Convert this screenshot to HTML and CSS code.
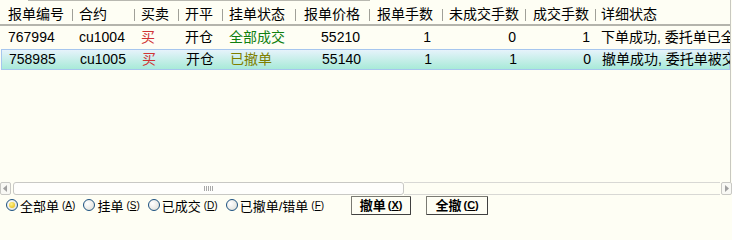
FILE: index.html
```html
<!DOCTYPE html>
<html lang="zh">
<head>
<meta charset="utf-8">
<link rel="stylesheet" href="styles.css">
</head>
<body>
<div class="panel">
  <div class="grid">
    <div class="topline"></div>
    <div class="row head">
      <div class="c c1">报单编号</div>
      <div class="c c2 sep">合约</div>
      <div class="c c3 sep">买卖</div>
      <div class="c c4 sep">开平</div>
      <div class="c c5 sep">挂单状态</div>
      <div class="c c6 sep">报单价格</div>
      <div class="c c7 sep">报单手数</div>
      <div class="c c8 sep">未成交手数</div>
      <div class="c c9 sep">成交手数</div>
      <div class="c c10 sep">详细状态</div>
    </div>
    <div class="row data">
      <div class="c c1 num-l">767994</div>
      <div class="c c2 num-l">cu1004</div>
      <div class="c c3 buy">买</div>
      <div class="c c4">开仓</div>
      <div class="c c5 done">全部成交</div>
      <div class="c c6 num">55210</div>
      <div class="c c7 num">1</div>
      <div class="c c8 num">0</div>
      <div class="c c9 num">1</div>
      <div class="c c10">下单成功, 委托单已全部成交</div>
    </div>
    <div class="row data selected">
      <div class="c c1 num-l">758985</div>
      <div class="c c2 num-l">cu1005</div>
      <div class="c c3 buy">买</div>
      <div class="c c4">开仓</div>
      <div class="c c5 cancel">已撤单</div>
      <div class="c c6 num">55140</div>
      <div class="c c7 num">1</div>
      <div class="c c8 num">1</div>
      <div class="c c9 num">0</div>
      <div class="c c10">撤单成功, 委托单被交易所撤销</div>
    </div>
  </div>
  <div class="hscroll">
    <div class="arrow left"><svg width="5" height="7" viewBox="0 0 5 7"><path d="M4 0 L0 3.5 L4 7 Z" fill="#a0a0a0"/></svg></div>
    <div class="thumb"><span class="grip"></span></div>
    <div class="track"></div>
    <div class="arrow right"><svg width="5" height="7" viewBox="0 0 5 7"><path d="M1 0 L5 3.5 L1 7 Z" fill="#a0a0a0"/></svg></div>
  </div>
  <div class="toolbar">
    <label class="radio on"><span class="dot"></span><span class="lbl">全部单</span><span class="key">(<u>A</u>)</span></label>
    <label class="radio"><span class="dot"></span><span class="lbl">挂单</span><span class="key">(<u>S</u>)</span></label>
    <label class="radio"><span class="dot"></span><span class="lbl">已成交</span><span class="key">(<u>D</u>)</span></label>
    <label class="radio"><span class="dot"></span><span class="lbl">已撤单/错单</span><span class="key">(<u>F</u>)</span></label>
    <button class="btn b1">撤单<span class="bkey">(<u>X</u>)</span></button>
    <button class="btn b2">全撤<span class="bkey">(<u>C</u>)</span></button>
  </div>
</div>
</body>
</html>
```

FILE: styles.css
```css
html, body {
  margin: 0;
  padding: 0;
  background: #fefef4;
}
body {
  width: 732px;
  height: 215px;
  overflow: hidden;
  font-family: "Liberation Sans", "Noto Sans CJK SC", sans-serif;
  font-size: 14px;
  color: #000;
}
.panel {
  width: 732px;
  height: 215px;
  display: flex;
  flex-direction: column;
}
.grid {
  height: 182px;
  border-right: 1px solid #c8c8c0;
  width: 730px;
  overflow: hidden;
}
.topline {
  height: 1px;
  margin-left: 28px;
  width: 342px;
  background: #b8b8b0;
}
.row {
  display: flex;
  white-space: nowrap;
}
.head {
  height: 23px;
  border-bottom: 2px solid #b4b4ac;
}
.head .c {
  position: relative;
  padding-top: 4px;
  line-height: 19px;
}
.head .sep::before {
  content: "";
  position: absolute;
  left: 0;
  top: 8px;
  height: 12px;
  width: 1px;
  background: #a0a098;
}
.data {
  height: 21px;
  line-height: 21px;
  margin-top: 1px;
}
.selected {
  height: 19px;
  line-height: 19px;
  border: 1px solid #a6c6ee;
  margin-left: 1px;
  background: linear-gradient(#e6f3fb, #a8ead8);
}
.selected .c1 { width: 71px; padding-left: 7px; }
.c {
  box-sizing: border-box;
  overflow: hidden;
  flex: none;
}
.c1 { width: 72px; padding-left: 8px; }
.c2 { width: 62px; padding-left: 7px; }
.c3 { width: 44px; padding-left: 7px; }
.c4 { width: 44px; padding-left: 7px; }
.c5 { width: 73px; padding-left: 7px; }
.c6 { width: 74px; padding-left: 9px; }
.c7 { width: 73px; padding-left: 8px; }
.c8 { width: 83px; padding-left: 7px; }
.c9 { width: 70px; padding-left: 8px; }
.c10 { width: 140px; padding-left: 6px; }
.data .num { text-align: right; padding-right: 9px; padding-left: 0; }
.data .c7 { padding-right: 11px; }
.data .c9 { padding-right: 5px; }
.buy { color: #d03434; }
.done { color: #108010; }
.cancel { color: #7f7f00; }

.hscroll {
  height: 13px;
  display: flex;
  align-items: stretch;
  width: 732px;
}
.arrow {
  width: 11px;
  box-sizing: border-box;
  border: 1px solid #c8c8c4;
  border-radius: 2px;
  display: flex;
  align-items: center;
  justify-content: center;
  background: #f8f8f4;
}
.arrow.right { margin-left: 1px; }
.thumb {
  width: 391px;
  margin-left: 2px;
  box-sizing: border-box;
  border: 1px solid #c8c8c4;
  border-radius: 3px;
  background: #fefefc;
  display: flex;
  align-items: center;
  justify-content: center;
}
.grip {
  width: 9px;
  height: 5px;
  background: repeating-linear-gradient(90deg, #a8a8a8 0 1px, transparent 1px 2px);
}
.track {
  flex: 1;
  border-top: 1px solid #d8d8d4;
  border-bottom: 1px solid #d8d8d4;
}

.toolbar {
  height: 20px;
  display: flex;
  align-items: center;
  white-space: nowrap;
  gap: 8px;
  padding-left: 6px;
}
.radio {
  display: flex;
  align-items: center;
  font-size: 13px;
}
.dot {
  box-sizing: border-box;
  width: 12px;
  height: 12px;
  border-radius: 50%;
  border: 1px solid #1c5180;
  background: radial-gradient(circle at 35% 35%, #ffffff, #dcdcd4);
  margin-right: 2px;
  position: relative;
  flex: none;
}
.radio.on .dot::after {
  content: "";
  position: absolute;
  left: 2px;
  top: 2px;
  width: 6px;
  height: 6px;
  border-radius: 50%;
  background: radial-gradient(circle at 40% 35%, #fff590, #e6b400);
}
.key {
  font-size: 10px;
  margin-left: 3px;
}
.btn {
  font-family: "Liberation Sans", "Noto Sans CJK SC", sans-serif;
  font-weight: bold;
  font-size: 13px;
  height: 19px;
  padding: 0;
  box-sizing: border-box;
  background: #fefef4;
  border: 1px solid #7a7a72;
  border-right-color: #404040;
  border-bottom-color: #404040;
  border-radius: 1px;
  display: flex;
  align-items: center;
  justify-content: center;
  line-height: 17px;
  color: #000;
}
.b1 { width: 60px; margin-left: 19px; }
.b2 { width: 62px; margin-left: 7px; }
.bkey { font-size: 11px; margin-left: 2px; }
```
